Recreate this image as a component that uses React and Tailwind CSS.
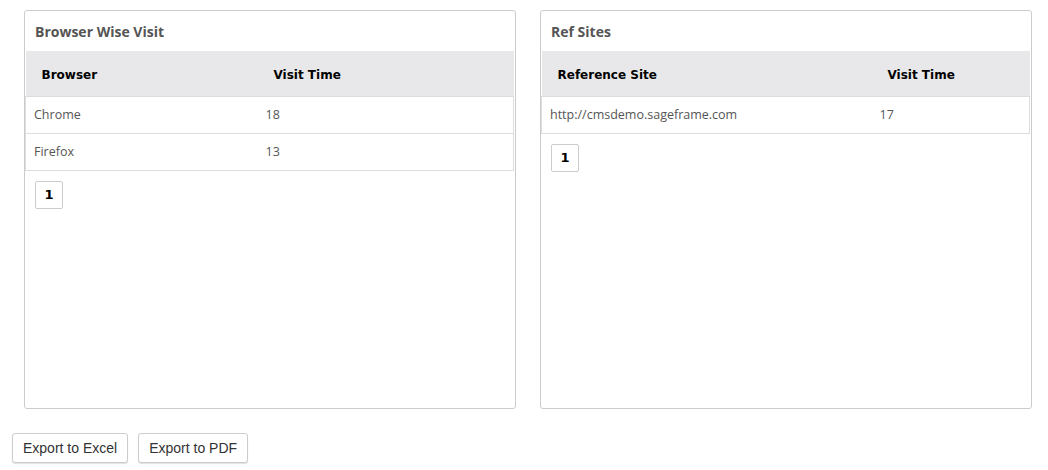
import React from "react";

const panels = [
  {
    title: "Browser Wise Visit",
    cols: ["Browser", "Visit Time"],
    firstWidth: "w-[232px]",
    rows: [
      ["Chrome", "18"],
      ["Firefox", "13"],
    ],
  },
  {
    title: "Ref Sites",
    cols: ["Reference Site", "Visit Time"],
    firstWidth: "w-[330px]",
    rows: [["http://cmsdemo.sageframe.com", "17"]],
  },
];

function Panel({ title, cols, rows, firstWidth }) {
  return (
    <div className="h-[399px] w-[492px] rounded-[3px] border border-[#cccccc] bg-white">
      <h3 className="h-[40px] pl-[10px] pt-[11px] text-[14px] font-bold leading-[20px] text-[#555555] [font-family:'Open_Sans',sans-serif]">
        {title}
      </h3>
      <table className="w-[489px] border-collapse">
        <thead>
          <tr className="bg-[#e8e8ea]">
            {cols.map((c, i) => (
              <th
                key={c}
                className={`h-[45px] pl-[16px] pt-[3px] text-left text-[12px] font-bold text-black [font-family:'DejaVu_Sans',sans-serif] ${i === 0 ? firstWidth : ""}`}
              >
                {c}
              </th>
            ))}
          </tr>
        </thead>
        <tbody>
          {rows.map((r) => (
            <tr key={r[0]} className="border border-[#dddddd]">
              {r.map((v, i) => (
                <td
                  key={i}
                  className="h-[37px] pl-[8px] pt-[2px] text-[12.5px] text-[#555555] [font-family:'Open_Sans',sans-serif]"
                >
                  {v}
                </td>
              ))}
            </tr>
          ))}
        </tbody>
      </table>
      <div className="pl-[10px] pt-[10px]">
        <button className="flex h-[28px] w-[28px] items-center justify-center rounded-[2px] border border-[#cccccc] bg-white text-[13px] font-bold text-black [font-family:'DejaVu_Sans',sans-serif]">
          1
        </button>
      </div>
    </div>
  );
}

export default function App() {
  return (
    <div className="h-[470px] w-[1048px] bg-white">
      <div className="flex gap-[24px] pl-[24px] pt-[10px]">
        {panels.map((p) => (
          <Panel key={p.title} {...p} />
        ))}
      </div>
      <div className="flex gap-[10px] pl-[12px] pt-[24px]">
        {["Export to Excel", "Export to PDF"].map((b) => (
          <button
            key={b}
            className="h-[30px] rounded-[3px] border border-[#cccccc] bg-white px-[10px] pt-[1px] text-[14px] text-[#333333] shadow-[0_1px_1px_rgba(0,0,0,0.12)] [font-family:'Liberation_Sans',Arial,sans-serif]"
          >
            {b}
          </button>
        ))}
      </div>
    </div>
  );
}
